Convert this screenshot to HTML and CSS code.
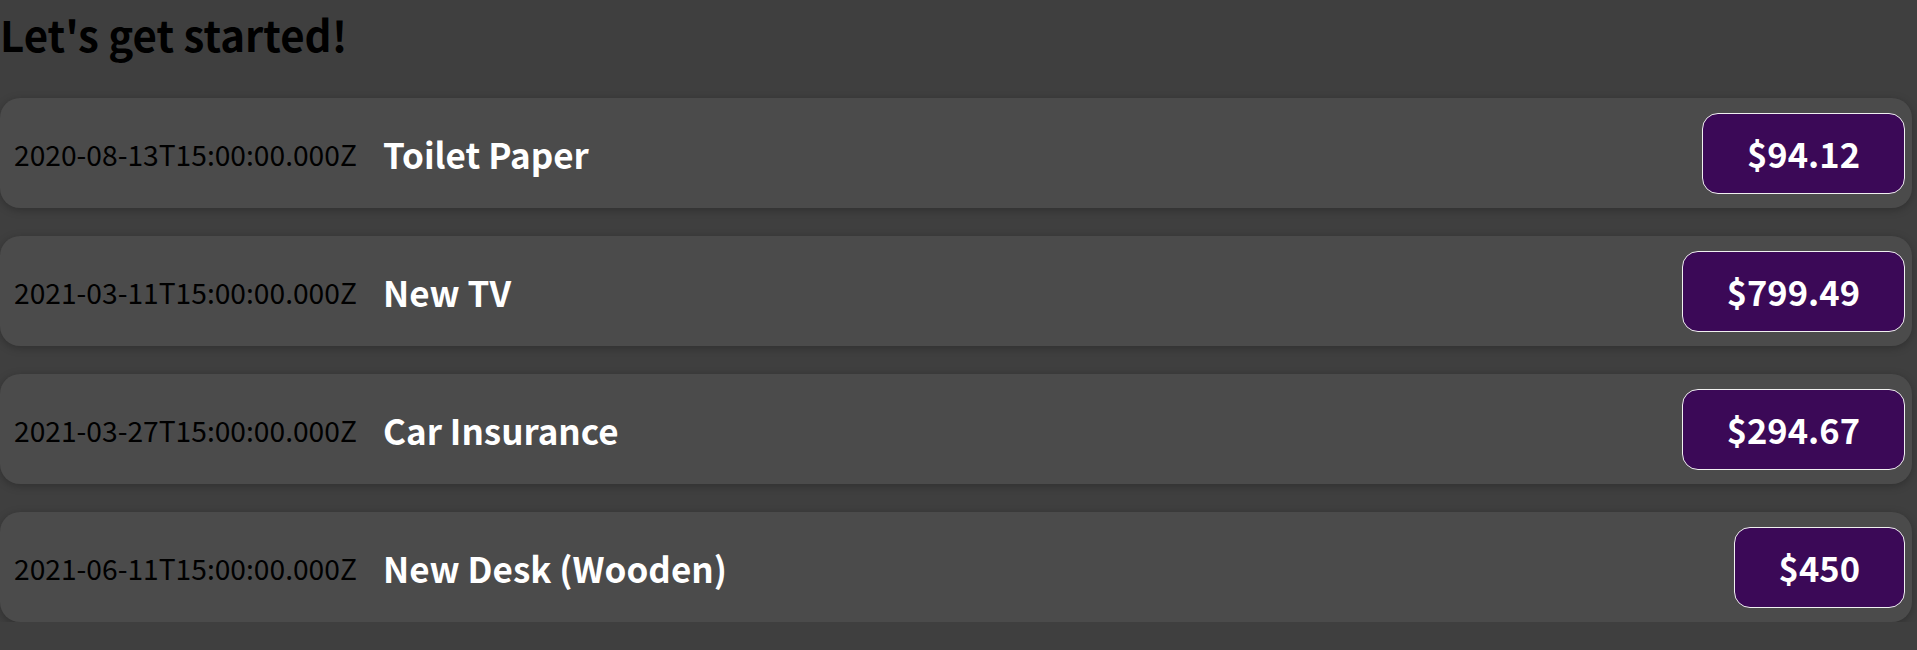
FILE: index.html
```html
<!DOCTYPE html>
<html lang="en">
<head>
<meta charset="utf-8">
<title>Expenses</title>
<link rel="stylesheet" href="styles.css">
</head>
<body>
<main class="page">
  <h1 class="title">Let's get started!</h1>
  <ul class="expenses">
    <li class="expense">
      <div class="expense__date">2020-08-13T15:00:00.000Z</div>
      <h2 class="expense__name">Toilet Paper</h2>
      <div class="expense__price">$94.12</div>
    </li>
    <li class="expense">
      <div class="expense__date">2021-03-11T15:00:00.000Z</div>
      <h2 class="expense__name">New TV</h2>
      <div class="expense__price">$799.49</div>
    </li>
    <li class="expense">
      <div class="expense__date">2021-03-27T15:00:00.000Z</div>
      <h2 class="expense__name">Car Insurance</h2>
      <div class="expense__price">$294.67</div>
    </li>
    <li class="expense">
      <div class="expense__date">2021-06-11T15:00:00.000Z</div>
      <h2 class="expense__name">New Desk (Wooden)</h2>
      <div class="expense__price">$450</div>
    </li>
  </ul>
</main>
</body>
</html>
```

FILE: styles.css
```css
html, body {
  margin: 0;
  padding: 0;
  background: #3f3f3f;
  font-family: "Noto Sans CJK JP", "Noto Sans", sans-serif;
}

.page {
  padding: 10px 5px 0 0;
}

.title {
  margin: 0 0 41px 0;
  font-size: 42px;
  line-height: 47px;
  font-weight: 700;
  color: #000;
}

.expenses {
  list-style: none;
  margin: 0;
  padding: 0;
  display: flex;
  flex-direction: column;
  gap: 28px;
}

.expense {
  display: flex;
  align-items: center;
  height: 110px;
  box-sizing: border-box;
  padding: 0 7px 0 14px;
  background: #4b4b4b;
  border-radius: 20px;
  box-shadow: 0 2px 8px rgba(0, 0, 0, 0.25);
}

.expense__date {
  flex: none;
  width: 369px;
  white-space: nowrap;
  font-size: 28.2px;
  color: #000;
}

.expense__name {
  flex: 1;
  margin: 0;
  font-size: 35px;
  font-weight: 700;
  color: #fff;
}

.expense__price {
  font-size: 34.5px;
  line-height: 47px;
  font-weight: 700;
  color: #fff;
  background: #3b0957;
  border: 1px solid #f0f0f0;
  border-radius: 16px;
  padding: 16px 44px;
}
```
